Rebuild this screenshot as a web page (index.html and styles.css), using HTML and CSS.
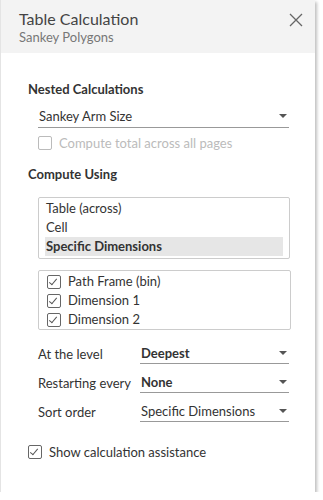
FILE: index.html
```html
<!DOCTYPE html>
<html>

<head>
    <link rel="stylesheet" href="styles.css">
</head>

<body>
    <div class="panel">
        <div class="header">
            <div>
                <div class="title">Table Calculation</div>
                <div class="subtitle">Sankey Polygons</div>
            </div>
            <svg class="close" width="14" height="14" viewBox="0 0 14 14">
                <path d="M1 1 L13 13 M13 1 L1 13" stroke="#666" stroke-width="1.3" fill="none" />
            </svg>
        </div>

        <div class="body">
            <div class="section-title">Nested Calculations</div>
            <div class="select wide">
                <span>Sankey Arm Size</span>
                <span class="arrow"></span>
            </div>
            <label class="check disabled">
                <span class="box"></span>
                Compute total across all pages
            </label>

            <div class="section-title using">Compute Using</div>
            <ul class="listbox">
                <li>Table (across)</li>
                <li>Cell</li>
                <li class="selected">Specific Dimensions</li>
            </ul>
            <ul class="listbox dims">
                <li><span class="box on"></span>Path Frame (bin)</li>
                <li><span class="box on"></span>Dimension 1</li>
                <li><span class="box on"></span>Dimension 2</li>
            </ul>

            <div class="rows">
                <div class="row">
                    <span class="label">At the level</span>
                    <div class="select"><b>Deepest</b><span class="arrow"></span></div>
                </div>
                <div class="row">
                    <span class="label">Restarting every</span>
                    <div class="select"><b>None</b><span class="arrow"></span></div>
                </div>
                <div class="row">
                    <span class="label">Sort order</span>
                    <div class="select"><span>Specific Dimensions</span><span class="arrow"></span></div>
                </div>
            </div>

            <label class="check assist">
                <span class="box on"></span>
                Show calculation assistance
            </label>
        </div>
    </div>
</body>

</html>
```

FILE: styles.css
```css
body {
    margin: 0;
    background: #fff;
    font-family: Lato, "Open Sans", sans-serif;
    color: #333;
}

.panel {
    width: 314px;
    height: 492px;
    border-left: 1px solid #e4e4e4;
    box-shadow: 2px 2px 3px rgba(0, 0, 0, 0.25);
    background: #fff;
}

.header {
    background: #f3f3f3;
    height: 53px;
    display: flex;
    justify-content: space-between;
    padding: 9px 0 0 18px;
    box-sizing: border-box;
}

.title {
    font-size: 16px;
    color: #444;
    line-height: 20px;
}

.subtitle {
    font-size: 13px;
    color: #777;
    line-height: 16px;
}

.close {
    margin: 4px 12px 0 0;
}

.body {
    padding: 28px 0 0 27px;
}

.section-title {
    font-size: 13px;
    font-weight: bold;
    line-height: 16px;
}

.using {
    margin-top: 15px;
}

.select {
    display: flex;
    justify-content: space-between;
    align-items: center;
    border-bottom: 1px solid #999;
    font-size: 13px;
    height: 20px;
    padding: 0 2px 0 1px;
    width: 148px;
}

.select.wide {
    width: 248px;
    margin: 8px 0 0 10px;
    height: 22px;
}

.arrow {
    width: 0;
    height: 0;
    border-left: 4px solid transparent;
    border-right: 4px solid transparent;
    border-top: 4px solid #555;
}

.check {
    display: flex;
    align-items: center;
    font-size: 13px;
}

.check.disabled {
    color: #bbb;
    margin: 7px 0 0 10px;
}

.box {
    width: 12px;
    height: 12px;
    border: 1px solid #bbb;
    border-radius: 2px;
    margin-right: 7px;
    position: relative;
    flex: none;
}

.box.on {
    border-color: #666;
}

.box.on::after {
    content: "";
    position: absolute;
    left: 3px;
    top: 1px;
    width: 3px;
    height: 7px;
    border-right: 1.5px solid #555;
    border-bottom: 1.5px solid #555;
    transform: rotate(40deg);
}

.listbox {
    list-style: none;
    margin: 15px 0 0 10px;
    padding: 1px 6px 2px 6px;
    width: 238px;
    border: 1px solid #ccc;
    border-radius: 2px;
    font-size: 13px;
}

.listbox li {
    height: 19px;
    line-height: 19px;
    padding-left: 1px;
}

.listbox li.selected {
    background: #e6e6e6;
    font-weight: bold;
}

.listbox.dims {
    margin-top: 11px;
    padding: 1px 6px 0 7px;
}

.dims li {
    display: flex;
    align-items: center;
}

.rows {
    margin: 9px 0 0 10px;
}

.row {
    display: flex;
    align-items: center;
    font-size: 13px;
    height: 29px;
}

.row .label {
    width: 102px;
}

.row .select {
    width: 146px;
}

.row b {
    font-weight: bold;
}

.check.assist {
    margin-top: 18px;
}
```
